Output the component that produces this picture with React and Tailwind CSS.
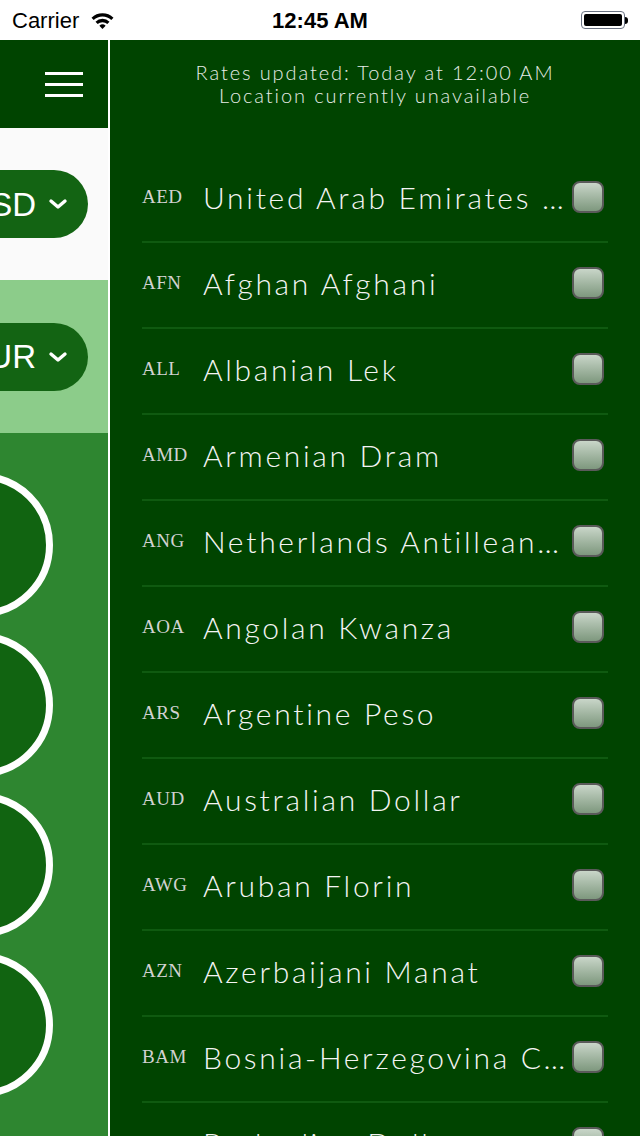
import React from "react";

const currencies = [
  ["AED", "United Arab Emirates Dirham"],
  ["AFN", "Afghan Afghani"],
  ["ALL", "Albanian Lek"],
  ["AMD", "Armenian Dram"],
  ["ANG", "Netherlands Antillean Guilder"],
  ["AOA", "Angolan Kwanza"],
  ["ARS", "Argentine Peso"],
  ["AUD", "Australian Dollar"],
  ["AWG", "Aruban Florin"],
  ["AZN", "Azerbaijani Manat"],
  ["BAM", "Bosnia-Herzegovina Convertible Mark"],
  ["BBD", "Barbadian Dollar"],
];

function Chevron() {
  return (
    <svg width="20" height="14" viewBox="0 0 20 14" fill="none">
      <path d="M3 4l7 6 7-6" stroke="white" strokeWidth="3.4" strokeLinecap="round" strokeLinejoin="round" />
    </svg>
  );
}

function Pill({ label }) {
  return (
    <div className="-ml-[40px] flex h-[68px] w-[128px] items-center justify-end gap-3 rounded-full bg-[#136413] pr-5 text-white">
      <span className="text-[33px] leading-none font-['Liberation_Sans',sans-serif]">{label}</span>
      <Chevron />
    </div>
  );
}

function StatusBar() {
  return (
    <div className="relative flex h-10 shrink-0 items-center bg-white px-3 text-black font-['Liberation_Sans',sans-serif]">
      <span className="text-[22px]">Carrier</span>
      <svg className="ml-3" width="23" height="18" viewBox="0 0 22 17">
        <path d="M0.5 6.3a15 15 0 0 1 21 0l-2.1 2.3a12 12 0 0 0-16.8 0z" fill="black" />
        <path d="M4.3 10.1a9.6 9.6 0 0 1 13.4 0l-2.1 2.3a6.6 6.6 0 0 0-9.2 0z" fill="black" />
        <path d="M8 13.9a4.5 4.5 0 0 1 6 0L11 17z" fill="black" />
      </svg>
      <span className="absolute left-1/2 -translate-x-1/2 text-[22px] font-bold">12:45 AM</span>
      <div className="ml-auto flex items-center">
        <div className="h-[18px] w-[44px] rounded-[4px] border border-gray-500 p-[2px]">
          <div className="h-full w-full rounded-[2px] bg-black" />
        </div>
        <div className="h-[7px] w-[3px] rounded-r-sm bg-black" />
      </div>
    </div>
  );
}

function Row({ code, name }) {
  return (
    <div className="flex h-[86px] shrink-0 items-center border-b-2 border-[#0f5a10] pb-1">
      <span className="w-[61px] shrink-0 text-[19px] tracking-[0.5px] text-[#d2d2d2] font-['Liberation_Serif',serif]">
        {code}
      </span>
      <span className="min-w-0 flex-1 truncate pr-1 text-[30px] font-light tracking-[2.7px] text-[#f4f4f4] font-['Lato',sans-serif]">
        {name}
      </span>
      <div className="mr-1 h-8 w-8 shrink-0 rounded-[8px] border-2 border-[#5a5a5a] bg-gradient-to-b from-[#c9d6c9] to-[#7e987e]" />
    </div>
  );
}

export default function App() {
  return (
    <div className="flex h-[1136px] w-[640px] flex-col overflow-hidden bg-white">
      <StatusBar />
      <div className="flex min-h-0 flex-1 overflow-hidden">
        {/* side menu, peeking out on the left */}
        <div className="flex w-[108px] shrink-0 flex-col overflow-hidden">
          <div className="flex h-[88px] shrink-0 items-center justify-end bg-[#004400] pr-[25px]">
            <div className="flex flex-col gap-2">
              <div className="h-[3px] w-[38px] bg-white" />
              <div className="h-[3px] w-[38px] bg-white" />
              <div className="h-[3px] w-[38px] bg-white" />
            </div>
          </div>
          <div className="flex h-[152px] shrink-0 items-center bg-[#fafafa]">
            <Pill label="USD" />
          </div>
          <div className="flex h-[153px] shrink-0 items-center bg-[#8ccc8a]">
            <Pill label="EUR" />
          </div>
          <div className="flex flex-1 flex-col gap-4 bg-[#2e8630] pt-10">
            {[0, 1, 2, 3].map((i) => (
              <div key={i} className="-ml-[91px] h-[144px] w-[144px] shrink-0 rounded-full border-[7px] border-white bg-[#116411]" />
            ))}
          </div>
        </div>
        <div className="w-[2px] shrink-0 bg-white" />
        {/* currency list */}
        <div className="flex min-w-0 flex-1 flex-col overflow-hidden bg-[#004400]">
          <div className="flex h-[117px] shrink-0 flex-col items-center pt-[21px] text-[20px] leading-[23px] font-light tracking-[1.9px] text-[#e6ece6] font-['Lato',sans-serif]">
            <span>Rates updated: Today at 12:00 AM</span>
            <span>Location currently unavailable</span>
          </div>
          <div className="flex flex-col px-8">
            {currencies.map(([code, name]) => (
              <Row key={code} code={code} name={name} />
            ))}
          </div>
        </div>
      </div>
    </div>
  );
}
